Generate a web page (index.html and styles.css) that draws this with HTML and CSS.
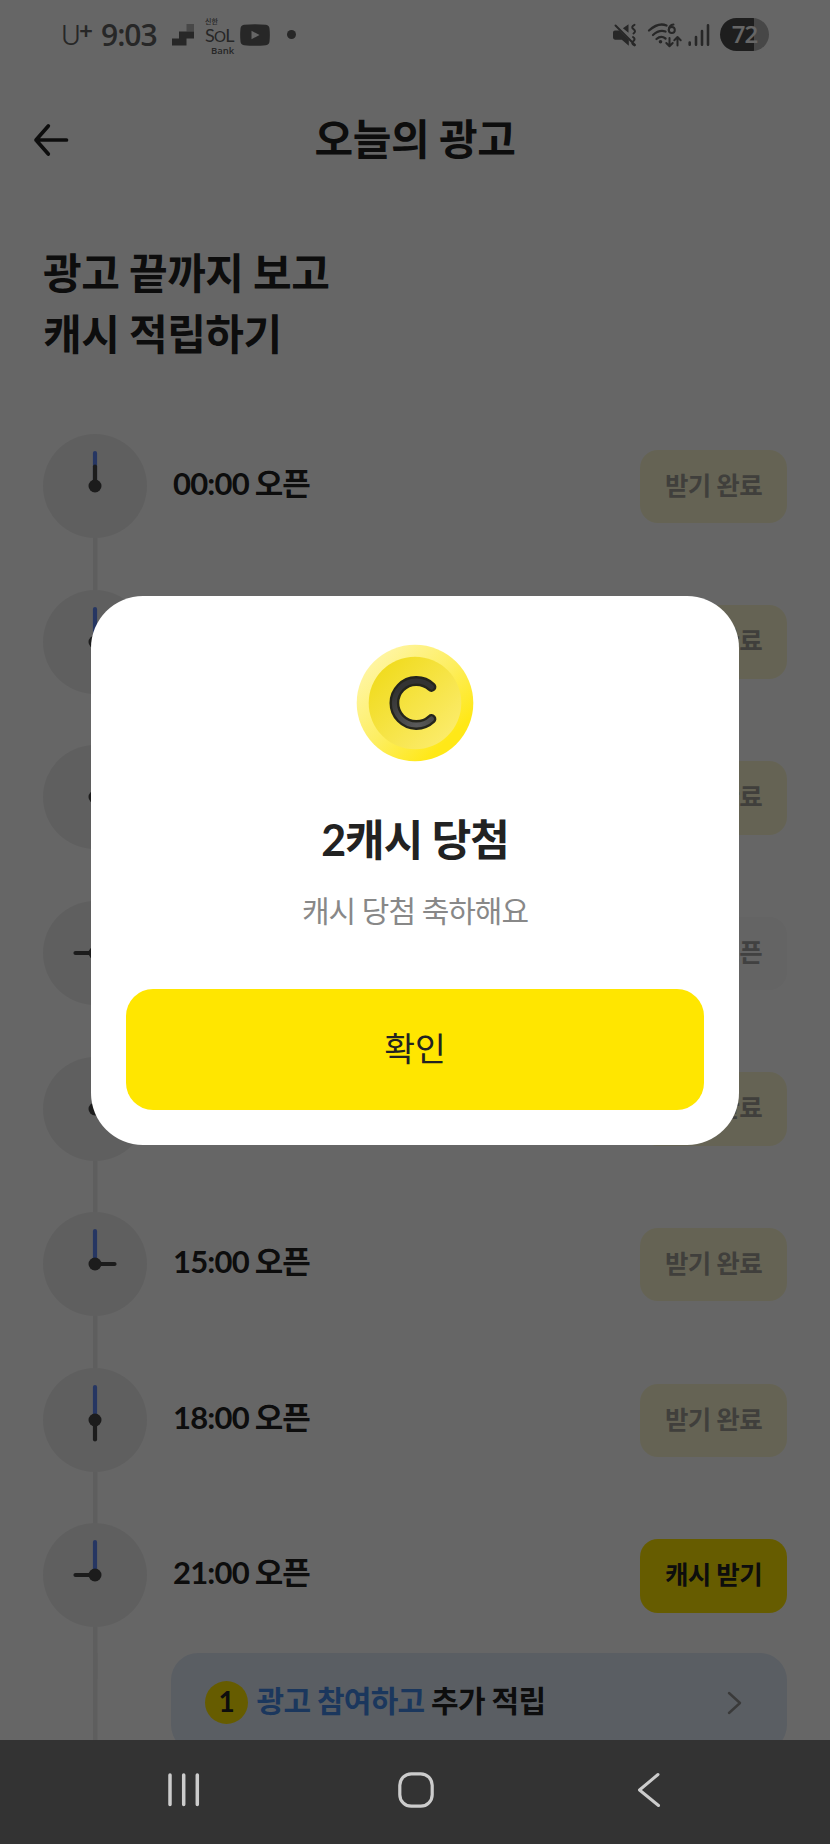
FILE: index.html
```html
<!DOCTYPE html>
<html lang="ko">
<head>
<meta charset="utf-8">
<title>오늘의 광고</title>
<link rel="stylesheet" href="styles.css">
</head>
<body>
<div class="screen">
  <div class="page">
    <div class="status">
      <div class="status-left">
        <span class="carrier">U<sup>+</sup></span>
        <span class="clock-text">9:03</span>
        <svg class="ic-steps" width="22" height="22" viewBox="0 0 22 22"><path fill="#b3b3b3" d="M14.500 0H22v7.500h-7.500z"/><path fill="#616161" d="M7 7.500h15v7h-7.500v7H0v-7h7z"/></svg>
        <span class="sol"><span class="sol-top">신한</span><span class="sol-mid">S<i>O</i>L</span><span class="sol-bot">Bank</span></span>
        <svg class="ic-yt" width="30" height="22" viewBox="0 0 30 22"><path fill="#616161" d="M4 .8Q15-.3 26 .8 29.200 1.200 29.500 4.500 30.200 11 29.500 17.500 29.200 20.800 26 21.200 15 22.200 4 21.200.8 20.800.5 17.500-.2 11 .5 4.500.8 1.200 4 .8z"/><path fill="#fff" d="M11.500 6.800v8.400l8-4.200z"/></svg>
        <span class="dot"></span>
      </div>
      <div class="status-right">
        <svg width="107" height="34" viewBox="613 18 107 34" fill="none" stroke="#616161" stroke-linecap="round" stroke-linejoin="round">
          <path fill="#616161" stroke="none" d="M628.500 24.200v8.600l-5.600-4.600zM615 30.600h4.200l9.600 9.200v6l-7-6h-6.800q-2-.2-2-2.200v-5q0-2 2-2z"/>
          <path stroke-width="2" d="M615.500 25.500l19.500 19.500M634.500 24.800q-4 2.200-1 4.300t0 4.400M633 37q3 2 .3 4.200t1.200 4.200"/>
          <path stroke-width="2.300" d="M649 30.500q9.500-8.500 17.500-5M653 35q6-5.500 12.500-3.500M656.500 39q4.500-4 9-.5"/>
          <circle cx="660.500" cy="41.700" r="1.800" fill="#616161" stroke="none"/>
          <path stroke-width="2" d="M673.500 24.500q-4.500.5-4.800 5.500M669.500 38v8m-3.200-3l3.200 3.200 3.200-3.200M677.500 45.500v-8.500m-3.200 3.200l3.200-3.200 3.200 3.200"/>
          <circle cx="671.800" cy="30" r="3" stroke-width="2"/>
          <path stroke-width="2.600" d="M689.700 42.500v2.200M696 37v7.700M702 31v13.700M708 25.200v19.500"/>
        </svg>
        <span class="batt">72</span>
      </div>
    </div>

    <div class="topbar">
      <svg class="back" width="36" height="34" viewBox="0 0 36 34"><path d="M15.300 3L3 17l12.300 14M3 17h30.500" fill="none" stroke="#222" stroke-width="3.700" stroke-linecap="round" stroke-linejoin="round"/></svg>
      <h1 class="title">오늘의 광고</h1>
    </div>

    <h2 class="headline">광고 끝까지 보고<br>캐시 적립하기</h2>

    <svg width="0" height="0" class="defs">
      <symbol id="face" viewBox="0 0 104 104"><circle cx="52" cy="52" r="52" fill="#eee"/><path d="M52 52V19" stroke="#5f87f5" stroke-width="4.200" stroke-linecap="round"/></symbol>
      <symbol id="hour" viewBox="0 0 104 104"><path d="M52 52V32.500" stroke="#464646" stroke-width="4.200" stroke-linecap="round"/><circle cx="52" cy="52" r="6.500" fill="#464646"/></symbol>
    </svg>

    <div class="list">
      <div class="row"><svg class="face"><use href="#face"/><use href="#hour"/></svg><span class="time">00:00 오픈</span><span class="btn done">받기 완료</span></div>
      <div class="row"><svg class="face"><use href="#face"/><use href="#hour" transform="rotate(90 52 52)"/></svg><span class="time">03:00 오픈</span><span class="btn done">받기 완료</span></div>
      <div class="row"><svg class="face"><use href="#face"/><use href="#hour" transform="rotate(180 52 52)"/></svg><span class="time">06:00 오픈</span><span class="btn done">받기 완료</span></div>
      <div class="row"><svg class="face"><use href="#face"/><use href="#hour" transform="rotate(270 52 52)"/></svg><span class="time">09:00 오픈</span><span class="btn idle">오픈</span></div>
      <div class="row"><svg class="face"><use href="#face"/><use href="#hour"/></svg><span class="time">12:00 오픈</span><span class="btn done">받기 완료</span></div>
      <div class="row"><svg class="face"><use href="#face"/><use href="#hour" transform="rotate(90 52 52)"/></svg><span class="time">15:00 오픈</span><span class="btn done">받기 완료</span></div>
      <div class="row"><svg class="face"><use href="#face"/><use href="#hour" transform="rotate(180 52 52)"/></svg><span class="time">18:00 오픈</span><span class="btn done">받기 완료</span></div>
      <div class="row"><svg class="face"><use href="#face"/><use href="#hour" transform="rotate(270 52 52)"/></svg><span class="time">21:00 오픈</span><span class="btn get">캐시 받기</span></div>
    </div>
    <div class="bonus-wrap">
      <div class="bonus">
        <span class="num">1</span>
        <span class="bonus-text"><b>광고 참여하고</b> 추가 적립</span>
        <svg class="chev" width="18" height="26" viewBox="0 0 18 26"><path d="M3 3l11 10L3 23" fill="none" stroke="#929292" stroke-width="2.500" stroke-linecap="round" stroke-linejoin="round"/></svg>
      </div>
    </div>
  </div>

  <div class="scrim">
    <div class="dialog">
      <svg class="coin" width="122" height="122" viewBox="-61 -61 122 122">
        <defs>
          <linearGradient id="rim" x1="0" y1="0" x2="1" y2="1"><stop offset=".15" stop-color="#fff5a0"/><stop offset=".5" stop-color="#fdee60"/><stop offset=".8" stop-color="#ffe817"/></linearGradient>
          <linearGradient id="core" x1="0" y1="0" x2="1" y2="1"><stop offset=".15" stop-color="#f1dc21"/><stop offset=".85" stop-color="#fbeb68"/></linearGradient>
          <radialGradient id="ink" gradientUnits="userSpaceOnUse" cx="2" cy="22" r="40"><stop offset="0" stop-color="#5a5a5a"/><stop offset="1" stop-color="#333"/></radialGradient>
        </defs>
        <circle r="58.300" fill="url(#rim)"/><circle r="46.300" fill="url(#core)"/>
        <path d="M16.500-16A22 22 0 1 0 16.500 16" fill="none" stroke="#25251c" stroke-width="9.800" stroke-linecap="round"/>
        <path d="M16.500-16A22 22 0 1 0 16.500 16" fill="none" stroke="url(#ink)" stroke-width="5" stroke-linecap="round"/>
      </svg>
      <div class="d-title">2캐시 당첨</div>
      <div class="d-sub">캐시 당첨 축하해요</div>
      <div class="d-btn">확인</div>
    </div>
  </div>

  <div class="nav">
    <svg class="recents" width="34" height="36" viewBox="0 0 34 36"><path d="M3 3v29.500M16.700 3v29.500M30.300 3v29.500" stroke="#ccc" stroke-width="3.500" stroke-linecap="round"/></svg>
    <svg class="home" width="36" height="36" viewBox="0 0 36 36"><rect x="1.800" y="1.800" width="32.400" height="32.400" rx="11.500" fill="none" stroke="#ccc" stroke-width="3.200"/></svg>
    <svg width="24" height="36" viewBox="0 0 24 36"><path d="M21 2.500L2.500 18 21.500 33.500" fill="none" stroke="#ccc" stroke-width="3" stroke-linecap="round" stroke-linejoin="round"/></svg>
  </div>
</div>
</body>
</html>
```
FILE: styles.css
```css
* { box-sizing: border-box; }
body { margin: 0; background: #fff; font-family: Lato, "Noto Sans CJK KR", sans-serif; color: #222; }
.screen { position: relative; width: 830px; height: 1844px; overflow: hidden; display: flex; flex-direction: column; }
.page { height: 1740px; overflow: hidden; }

.status { height: 70px; display: flex; justify-content: space-between; align-items: flex-start; padding: 18px 61px 0 61px; color: #616161; }
.status-left, .status-right { display: flex; align-items: flex-start; }
.carrier { width: 40px; font: 300 27px/36px Inter, sans-serif; white-space: nowrap; }
.carrier sup { font-size: 24px; line-height: 0; vertical-align: 7px; margin-left: -3px; font-weight: 500; }
.clock-text { width: 71px; font: 600 30px/34px "Open Sans", sans-serif; letter-spacing: -1px; }
.ic-steps { margin: 6px 11px 0 0; }
.sol { width: 35px; display: flex; flex-direction: column; height: 37px; }
.sol-top { font: 500 7px/7px "Noto Sans CJK KR", sans-serif; }
.sol-mid { font: 400 18px/18px Lato, sans-serif; letter-spacing: -.8px; padding-top: 1px; }
.sol-mid i { font-style: normal; font-size: 15px; }
.sol-bot { font: 600 9.500px/11px "Open Sans", sans-serif; padding-left: 6px; }
.ic-yt { margin-top: 6px; }
.dot { width: 9.400px; height: 9.400px; border-radius: 50%; background: #616161; margin: 12px 0 0 17px; }
.batt { width: 49px; height: 33px; border-radius: 16.500px; background: linear-gradient(90deg, #4b4b4b 34.500px, #b1b1b1 34.500px); color: #fff; text-align: center; font: 600 24px/32px "Open Sans", sans-serif; letter-spacing: -1px; }

.topbar { height: 140px; display: grid; grid-template-columns: 70px 1fr 70px; align-items: start; }
.back { margin: 53px 0 0 33px; }
.title { margin: 39px 0 0; text-align: center; font-size: 42px; line-height: 60px; font-weight: 700; letter-spacing: -.4px; }
.headline { margin: 33px 0 0 43px; font-size: 42px; line-height: 60.500px; font-weight: 700; letter-spacing: -.5px; }

.defs { display: block; }
.list { margin: 70px 43px 0; }
.row { height: 155.650px; padding-bottom: 51.650px; display: flex; align-items: center; background: linear-gradient(#ebebeb, #ebebeb) 50px 0 / 4.500px 100% no-repeat; }
.face { width: 104px; height: 104px; flex: none; }
.time { margin: -6px 0 0 26px; flex: 1; font-size: 31px; line-height: 44px; font-weight: 700; letter-spacing: -.8px; word-spacing: -1px; }
.btn { width: 147px; height: 73.500px; margin-top: 1px; border-radius: 18px; text-align: center; font-size: 25.500px; line-height: 70px; font-weight: 700; letter-spacing: -.6px; }
.done { background: #fcf8d2; color: #a09f96; }
.idle { background: #fafafa; color: #a2a2a2; text-align: right; padding-right: 25px; }
.get { background: #ffe600; }
.bonus-wrap { margin: -26px 43px 0; padding: 0 0 30px 128px; background: linear-gradient(#ebebeb, #ebebeb) 50px 0 / 4.500px 100% no-repeat; }
.bonus { height: 99px; border-radius: 27px; background: #e1ebf8; display: flex; align-items: center; padding: 0 43px 0 34px; }
.num { width: 43px; height: 43px; border-radius: 50%; background: #ffe600; text-align: center; font-size: 28px; line-height: 40px; font-weight: 700; }
.bonus-text { margin: -6px 0 0 8.500px; flex: 1; font-size: 30px; line-height: 44px; font-weight: 700; letter-spacing: -.7px; }
.bonus-text b { color: #448ae8; font-weight: inherit; }

.scrim { position: absolute; left: 0; top: 0; width: 830px; height: 1740px; background: rgba(0, 0, 0, .6); display: flex; align-items: center; justify-content: center; }
.dialog { width: 648.500px; height: 549px; border-radius: 52px; background: #fff; padding: 46.500px 35px 35px; display: flex; flex-direction: column; align-items: center; }
.coin { flex: none; }
.d-title { margin-top: 46px; font-size: 43px; line-height: 60px; font-weight: 700; letter-spacing: -1px; }
.d-sub { margin-top: 18px; font-size: 30px; line-height: 44px; color: #888; letter-spacing: -1px; }
.d-btn { margin-top: auto; align-self: stretch; height: 120.500px; border-radius: 27px; background: #ffe600; text-align: center; font-size: 33.500px; line-height: 118px; }

.nav { height: 104px; background: #333; display: flex; align-items: center; padding: 0 0 5px 167px; }
.recents { margin-right: 197px; }
.home { margin-right: 203px; }
```
